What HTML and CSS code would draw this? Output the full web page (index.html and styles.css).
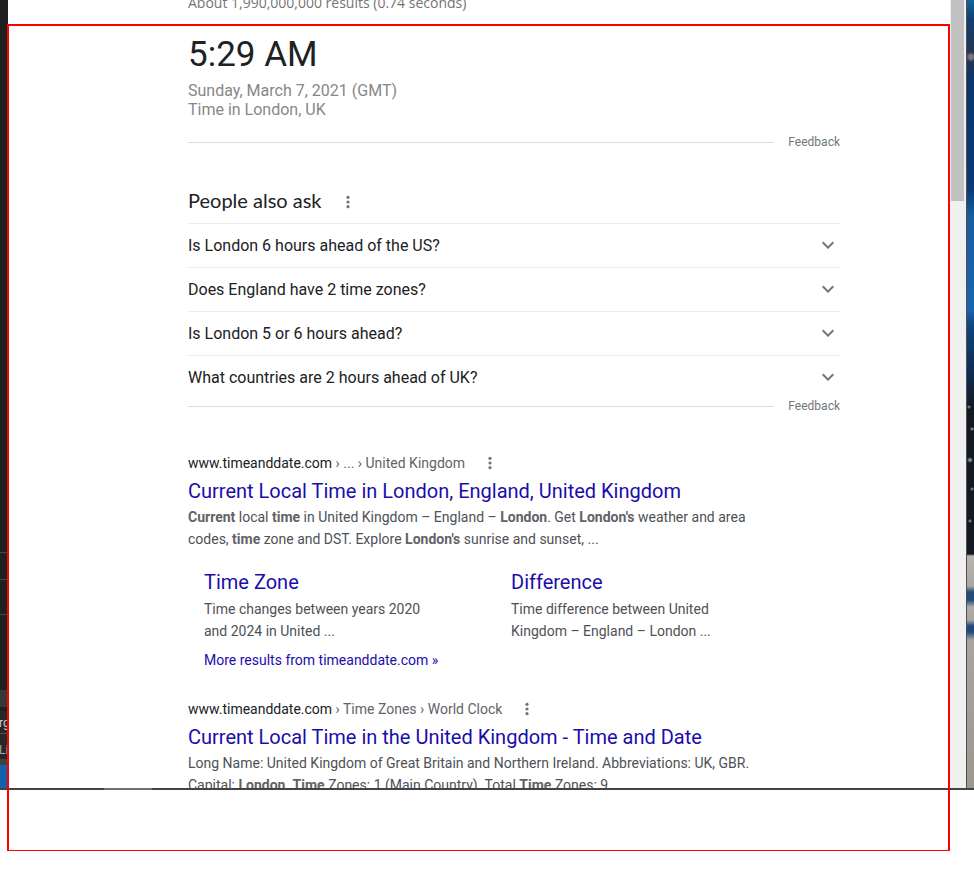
FILE: index.html
```html
<!DOCTYPE html>
<html lang="en">
<head>
<meta charset="utf-8">
<title>Time in London</title>
<link rel="stylesheet" href="styles.css">
</head>
<body>
<svg class="sprite" aria-hidden="true">
  <symbol id="dots" viewBox="0 0 18 18"><circle cx="9" cy="4.3" r="1.6"/><circle cx="9" cy="9" r="1.6"/><circle cx="9" cy="13.7" r="1.6"/></symbol>
  <symbol id="chevron" viewBox="0 0 24 24"><path d="M7.41 7.59 12 12.17l4.59-4.58L18 9l-6 6-6-6z"/></symbol>
</svg>
<div class="desktop">
  <aside class="editor">
    <div class="pane pane-top"></div>
    <div class="pane pane-small"></div>
    <div class="pane pane-medium"></div>
    <div class="pane pane-large"></div>
    <div class="pane-header"></div>
    <div class="pane-label pane-arg">rg</div>
    <div class="pane-label pane-line">Li</div>
    <div class="pane-footer"></div>
    <div class="pane-status"></div>
  </aside>
  <main class="page">
    <div class="column">
      <p class="stats">About 1,990,000,000 results (0.74 seconds)</p>
      <section>
        <h1 class="clock">5:29 AM</h1>
        <p class="place">Sunday, March 7, 2021 (GMT)<br>Time in London, UK</p>
        <div class="feedback"><a href="#">Feedback</a></div>
      </section>
      <section class="ask">
        <div class="ask-head">
          <h2>People also ask</h2>
          <button class="more" aria-label="About this result"><svg><use href="#dots"/></svg></button>
        </div>
        <ul class="questions">
          <li><button>Is London 6 hours ahead of the US?<svg><use href="#chevron"/></svg></button></li>
          <li><button>Does England have 2 time zones?<svg><use href="#chevron"/></svg></button></li>
          <li><button>Is London 5 or 6 hours ahead?<svg><use href="#chevron"/></svg></button></li>
          <li><button>What countries are 2 hours ahead of UK?<svg><use href="#chevron"/></svg></button></li>
        </ul>
        <div class="feedback"><a href="#">Feedback</a></div>
      </section>
      <article class="result first">
        <div class="source"><cite>www.timeanddate.com <span>› ... › United Kingdom</span></cite><button class="more" aria-label="About this result"><svg><use href="#dots"/></svg></button></div>
        <h3><a href="#">Current Local Time in London, England, United Kingdom</a></h3>
        <p class="snippet"><b>Current</b> local <b>time</b> in United Kingdom – England – <b>London</b>. Get <b>London's</b> weather and area codes, <b>time</b> zone and DST. Explore <b>London's</b> sunrise and sunset, ...</p>
        <div class="sitelinks">
          <div>
            <h3><a href="#">Time Zone</a></h3>
            <p>Time changes between years 2020 and 2024 in United ...</p>
          </div>
          <div>
            <h3><a href="#">Difference</a></h3>
            <p>Time difference between United Kingdom – England – London ...</p>
          </div>
        </div>
        <a class="all" href="#">More results from timeanddate.com »</a>
      </article>
      <article class="result">
        <div class="source"><cite>www.timeanddate.com <span>› Time Zones › World Clock</span></cite><button class="more" aria-label="About this result"><svg><use href="#dots"/></svg></button></div>
        <h3><a href="#">Current Local Time in the United Kingdom - Time and Date</a></h3>
        <p class="snippet">Long Name: United Kingdom of Great Britain and Northern Ireland. Abbreviations: UK, GBR. Capital: <b>London</b>. <b>Time</b> Zones: 1 (Main Country). Total <b>Time</b> Zones: 9.</p>
      </article>
    </div>
  </main>
  <div class="scrollbar"><div class="thumb"></div></div>
  <div class="wallpaper"></div>
  <div class="taskbar"></div>
  <div class="frame"></div>
</div>
</body>
</html>
```

FILE: styles.css
```css
* { box-sizing: border-box; }

body {
  margin: 0;
  background: #fff;
  color: #202124;
  font-family: Roboto, "Liberation Sans", sans-serif;
  font-size: 14px;
}

h1, h2, h3, p, ul { margin: 0; padding: 0; font-weight: 400; }
a { color: #1a0dab; text-decoration: none; }
button { border: 0; padding: 0; background: none; color: inherit; font: inherit; }
.sprite { display: none; }

.desktop {
  position: relative;
  display: grid;
  grid-template-columns: 8px minmax(0, 1fr) 16px 8px;
  grid-template-rows: minmax(0, 1fr) 2px;
  height: 100vh;
  padding-bottom: 86px;
  overflow: hidden;
}

/* Editor window showing behind the browser */
.editor {
  display: flex;
  flex-direction: column;
  justify-content: flex-end;
  overflow: hidden;
  background: #202022;
  color: #d0d0d0;
  font-size: 12px;
}
.pane { border-bottom: 1px solid #48484b; }
.pane-top { flex: 1; }
.pane-small { height: 27px; }
.pane-medium { height: 35px; }
.pane-large { height: 75px; border: 0; }
.pane-header { height: 17px; margin-bottom: 4px; background: #38383b; }
.pane-label { background: #28282b; white-space: nowrap; }
.pane-arg { height: 23px; line-height: 24px; border-bottom: 1px solid #505053; text-indent: -1px; }
.pane-line { height: 25px; line-height: 32px; color: #a8a8a8; text-indent: -1px; }
.pane-footer { height: 6px; background: #414144; }
.pane-status { height: 23px; background: #1261ae; }

.page { overflow: hidden; padding-left: 180px; }
.column { max-width: 652px; }

.stats {
  margin-top: -8px;
  color: #70757a;
  font-family: "Open Sans", Roboto, sans-serif;
  line-height: 22px;
}
.clock {
  margin-top: 18px;
  font-size: 35px;
  line-height: 46px;
}
.place {
  margin-top: 3px;
  color: #878787;
  font-size: 16px;
  line-height: 19px;
}

.feedback {
  display: flex;
  align-items: center;
  gap: 14px;
  font-size: 12px;
  line-height: 14px;
}
.feedback::before { content: ""; flex: 1; height: 1px; background: #dadce0; }
.feedback a { color: #70757a; }
.place + .feedback { margin-top: 16px; }

.more { width: 18px; height: 18px; }
.more svg { display: block; width: 18px; height: 18px; fill: #70757a; }

.ask { margin-top: 39px; }
.ask-head { display: flex; align-items: center; gap: 17px; margin-bottom: 7px; }
.ask-head h2 {
  padding-bottom: 4px;
  font-family: Lato, Roboto, sans-serif;
  font-size: 20px;
  line-height: 24px;
}
.questions { list-style: none; font-size: 16px; }
.questions li { border-top: 1px solid #ebebeb; }
.questions button {
  display: flex;
  align-items: center;
  justify-content: space-between;
  width: 100%;
  height: 43px;
  text-align: left;
}
.questions svg { width: 24px; height: 24px; fill: #70757a; }

.result { margin-top: 28px; }
.result.first { margin-top: 40px; }
.source { display: flex; align-items: center; gap: 16px; line-height: 20px; }
.source cite { font-style: normal; }
.source span { color: #5f6368; }
.result h3 { font-size: 20px; line-height: 26px; }
.source + h3 { margin-top: 5px; }
.snippet, .sitelinks p { color: #4d5156; line-height: 22px; }
.snippet { max-width: 600px; margin-top: 2px; }
.snippet b { color: #5f6368; font-weight: 700; }
.sitelinks {
  display: grid;
  grid-template-columns: repeat(2, minmax(0, 307px));
  margin-top: 19px;
  padding-left: 16px;
}
.sitelinks p { max-width: 236px; margin-top: 3px; }
.all { display: block; margin: 7px 0 0 16px; line-height: 22px; }

.scrollbar { padding: 0 2px 0 1px; background: #f0f0f0; }
.thumb { height: 201px; background: #c1c1c1; }

.wallpaper {
  border-left: 1px solid #4b5055;
  background:
    radial-gradient(circle at 4px 57px, #7f7480 0 2px, transparent 5px),
    radial-gradient(circle at 2px 407px, #59738e 0 1px, transparent 2px),
    radial-gradient(circle at 5px 429px, #6d8095 0 1px, transparent 2px),
    radial-gradient(circle at 3px 460px, #7890a7 0 1px, transparent 3px),
    radial-gradient(circle at 5px 489px, #60788f 0 1px, transparent 2px),
    radial-gradient(circle at 3px 521px, #66798d 0 1px, transparent 2px),
    linear-gradient(#15659c 0, #123e6c 20px, #263653 55px, #0d3569 80px, #0b3975 190px, #195c9f 215px, #1b65ac 310px, #12457c 325px, #102a50 375px, #121920 410px, #141a22 554px, #b7b3ae 556px, #aaa8a7 586px, #234a79 592px, #234a79 600px, #b0aba7 607px, #aaa5a0 620px, #204a7d 626px, #204a7d 632px, #a9a49d 640px, #9d978e 100%);
}
.taskbar {
  grid-column: 1 / -1;
  background: linear-gradient(90deg, #434343 104px, #707070 104px 152px, #434343 152px);
}

/* Highlight drawn over the windows */
.frame {
  position: absolute;
  inset: 24px 24px 25px 7px;
  border: 2px solid #f00;
  border-bottom-width: 1px;
  pointer-events: none;
}
```
